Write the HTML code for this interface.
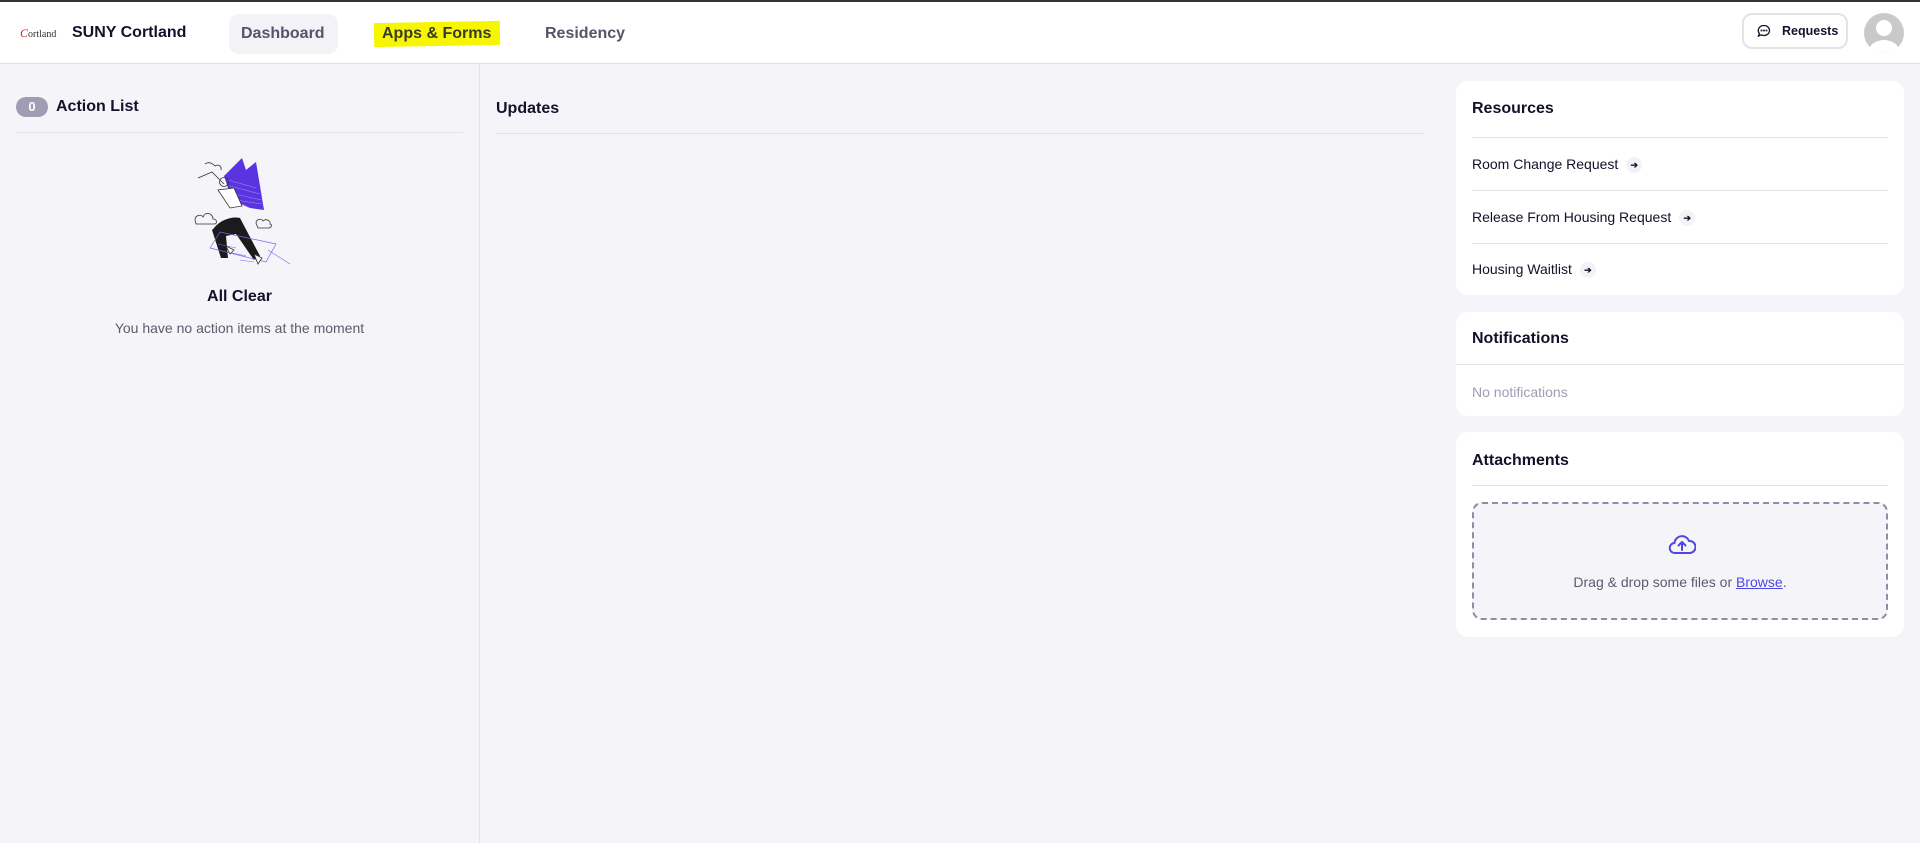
<!DOCTYPE html>
<html><head><meta charset="utf-8"><style>
*{box-sizing:border-box;margin:0;padding:0}
body{width:1920px;height:843px;overflow:hidden;background:#f5f5f9;font-family:"Liberation Sans",Arial,sans-serif;color:#14112a;position:relative}
.abs{position:absolute}
header{position:absolute;left:0;top:0;width:1920px;height:64px;background:#fff;border-top:2px solid #333;border-bottom:1px solid #dfdfe6}
.nav{font-size:16px;font-weight:bold;color:#55546a;top:23px}
.card{position:absolute;left:1456px;width:448px;background:#fff;border-radius:12px}
.t{font-size:16px;font-weight:bold;color:#14112a}
.item{position:absolute;left:16px;font-size:14px;color:#14112a}
.arr{display:inline-block;width:16px;height:16px;border-radius:50%;background:#f3f3f7;margin-left:8px;vertical-align:middle;text-align:center;font-size:9px;line-height:16px;font-weight:bold}
.hr{position:absolute;height:1px;background:#e2e2ea}
</style></head><body>
<header>
<div class="abs" style="left:20px;top:24px;font-family:'Liberation Serif',serif;font-size:12px;font-style:italic;color:#c0202a">C<span style="color:#333;font-style:normal;font-size:10px">ortland</span></div>
<div class="abs" style="left:72px;top:22px;font-size:16px;font-weight:bold;color:#14112a">SUNY Cortland</div>
<div class="abs" style="left:229px;top:12px;width:109px;height:40px;background:#f3f3f7;border-radius:10px"></div>
<div class="abs nav" style="left:241px">Dashboard</div>
<div class="abs" style="left:374px;top:20px;width:126px;height:24px;background:#f6f600;transform:rotate(-1deg)"></div>
<div class="abs nav" style="left:382px;color:#3a3a2a">Apps &amp; Forms</div>
<div class="abs nav" style="left:545px">Residency</div>
<div class="abs" style="left:1742px;top:11px;width:106px;height:36px;border:2px solid #e2e2ea;border-radius:10px;font-size:12.5px;font-weight:bold;padding:9px 0 0 38px">Requests</div>
<svg class="abs" style="left:1757px;top:22px" width="14" height="14" viewBox="0 0 14 14" fill="none" stroke="#14112a" stroke-width="1.3"><path d="M7 1.5a5.5 5 0 1 1-2.8 9.3L1.5 12l.9-2.5A5.5 5 0 0 1 7 1.5z"/><circle cx="4.5" cy="6.5" r=".4"/><circle cx="7" cy="6.5" r=".4"/><circle cx="9.5" cy="6.5" r=".4"/></svg>
<svg class="abs" style="left:1864px;top:11px" width="40" height="40" viewBox="0 0 40 40"><defs><clipPath id="c"><circle cx="20" cy="20" r="20"/></clipPath></defs><circle cx="20" cy="20" r="20" fill="#c9c9c9"/><g clip-path="url(#c)" fill="#fff"><circle cx="20" cy="15" r="8"/><ellipse cx="20" cy="40" rx="16" ry="13"/></g></svg>
</header>
<div class="abs" style="left:479px;top:64px;width:1px;height:779px;background:#e2e2ea"></div>
<div class="abs" style="left:16px;top:97px;width:32px;height:20px;border-radius:10px;background:#9e9db2;color:#fff;font-size:13px;font-weight:bold;text-align:center;line-height:20px">0</div>
<div class="abs t" style="left:56px;top:98px">Action List</div>
<div class="hr" style="left:16px;top:132px;width:447px"></div>
<svg class="abs" style="left:180px;top:150px" width="120" height="125" viewBox="0 0 120 125" fill="none" stroke="#333" stroke-width=".8">
<path d="M44 26L62 8l4 12 10-8 8 48-14-2-18-8z" fill="#5a34e0" stroke="none"/>
<path d="M48 30l28 8M50 36l30 8M54 44l28 6M56 50l26 4" stroke="#9a86f0" stroke-width=".6"/>
<path d="M25 14c4-3 8 0 10 2c3-2 7 0 6 4"/><path d="M18 28l14-6 12 12"/>
<path d="M15 70c0-5 6-6 8-3c2-6 10-4 10 2c4 0 5 5 1 5H16z"/><path d="M76 73c0-4 6-5 7-2c3-3 8 0 7 3c3 1 1 4-2 4H78z"/>
<circle cx="44" cy="32" r="4.5"/><path d="M38 40l12 18 12-2-8-18z" fill="#fff"/>
<path d="M34 78c6-8 18-12 26-10l20 38-6 4-18-26-10 2 2 22-7 0-9-28z" fill="#1b1b1b" stroke="none"/>
<path d="M30 98l56 14 10-18-56-12z" stroke="#7b66f0" stroke-width=".7"/><path d="M88 100l22 14M38 94l18 4M48 102l18 4M60 110l14 2" stroke="#7b66f0" stroke-width=".6"/>
<path d="M46 96l4 8 4-4zM74 104l4 10 4-6z" fill="#fff"/>
</svg>
<div class="abs" style="left:0;width:479px;top:288px;text-align:center;font-size:16px;font-weight:bold">All Clear</div>
<div class="abs" style="left:0;width:479px;top:320px;text-align:center;font-size:14px;color:#5c5a70">You have no action items at the moment</div>
<div class="abs t" style="left:496px;top:100px">Updates</div>
<div class="hr" style="left:496px;top:133px;width:929px"></div>
<div class="card" style="top:81px;height:214px">
<div class="abs t" style="left:16px;top:19px">Resources</div>
<div class="hr" style="left:16px;top:56px;width:416px"></div>
<div class="item" style="top:75px">Room Change Request<span class="arr">➔</span></div>
<div class="hr" style="left:16px;top:109px;width:416px"></div>
<div class="item" style="top:128px">Release From Housing Request<span class="arr">➔</span></div>
<div class="hr" style="left:16px;top:162px;width:416px"></div>
<div class="item" style="top:180px">Housing Waitlist<span class="arr">➔</span></div>
</div>
<div class="card" style="top:312px;height:104px">
<div class="abs t" style="left:16px;top:18px">Notifications</div>
<div class="hr" style="left:0;top:52px;width:448px"></div>
<div class="item" style="top:72px;color:#9e9db2">No notifications</div>
</div>
<div class="card" style="top:432px;height:205px">
<div class="abs t" style="left:16px;top:20px">Attachments</div>
<div class="hr" style="left:16px;top:53px;width:416px"></div>
<div class="abs" style="left:16px;top:70px;width:416px;height:118px;border:2px dashed #8e8da3;border-radius:10px;background:#f5f5f9"></div>
<svg class="abs" style="left:212px;top:101px" width="28" height="22" viewBox="0 0 28 22" fill="none" stroke="#4f46e5" stroke-width="2" stroke-linecap="round" stroke-linejoin="round"><path d="M7 20a5 5 0 0 1-.5-10A7.5 7.5 0 0 1 21 8a5.5 5.5 0 0 1 1 12z"/><path d="M14 17V9M10.5 12.5L14 9l3.5 3.5"/></svg>
<div class="abs" style="left:0;width:448px;top:142px;text-align:center;font-size:14px;color:#5c5a70">Drag &amp; drop some files or <span style="color:#4f46e5;text-decoration:underline">Browse</span>.</div>
</div>
</body></html>
